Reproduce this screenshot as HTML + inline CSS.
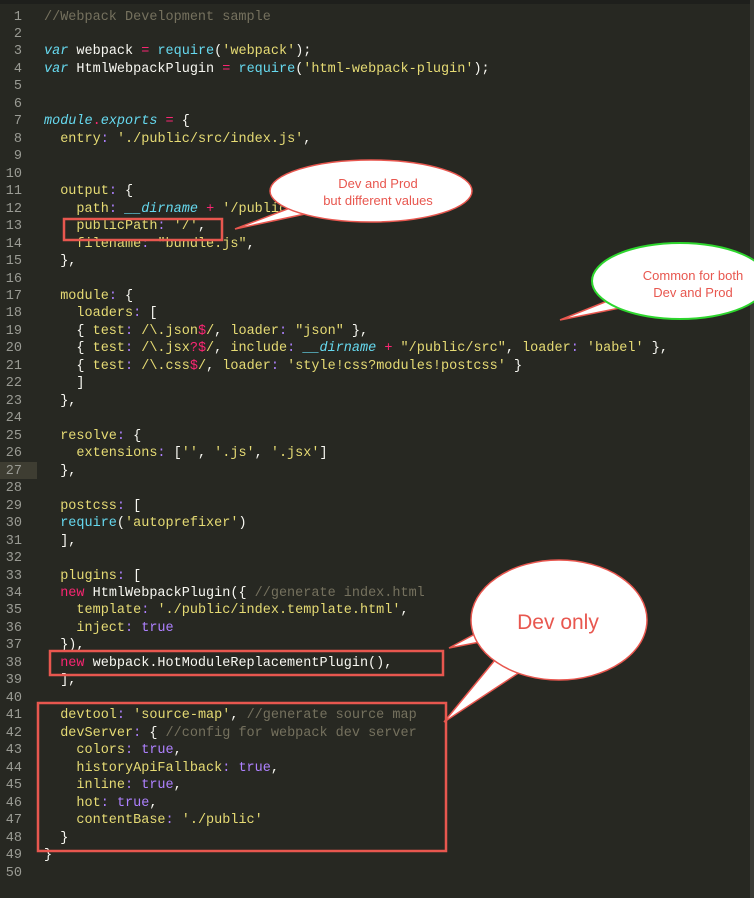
<!DOCTYPE html>
<html><head><meta charset="utf-8"><style>
html,body{margin:0;padding:0;background:#272822;width:754px;height:898px;overflow:hidden}
.l{position:absolute;left:0;height:17px;width:754px;font:13.5px/17px "Liberation Mono",monospace;white-space:pre;color:#F8F8F2}
.n{position:absolute;left:0;width:22px;text-align:right;color:#9a9b94}
.c{position:absolute;left:44px}
.cm{color:#75715E}.k{color:#F92672}.s{color:#66D9EF;font-style:italic}.f{color:#66D9EF}.st{color:#E6DB74}.p{color:#E6DB74}.o{color:#AE81FF}.t{color:#AE81FF}
</style></head><body>
<div style="position:absolute;left:0;top:0;width:754px;height:4px;background:#1e1f1c"></div>
<div style="position:absolute;left:750px;top:0;width:4px;height:898px;background:#3a3b36"></div>
<div style="position:absolute;left:0;top:462px;width:37px;height:17px;background:#3e3d32"></div>
<div id="code"></div>
<script>
const L=[
'<span class=cm>//Webpack Development sample</span>','',
'<span class=s>var</span> webpack <span class=k>=</span> <span class=f>require</span>(<span class=st>\'webpack\'</span>);',
'<span class=s>var</span> HtmlWebpackPlugin <span class=k>=</span> <span class=f>require</span>(<span class=st>\'html-webpack-plugin\'</span>);',
'','',
'<span class=s>module</span><span class=k>.</span><span class=s>exports</span> <span class=k>=</span> {',
'  <span class=p>entry</span><span class=o>:</span> <span class=st>\'./public/src/index.js\'</span>,',
'','',
'  <span class=p>output</span><span class=o>:</span> {',
'    <span class=p>path</span><span class=o>:</span> <span class=s>__dirname</span> <span class=k>+</span> <span class=st>\'/public\'</span>,',
'    <span class=p>publicPath</span><span class=o>:</span> <span class=st>\'/\'</span>,',
'    <span class=p>filename</span><span class=o>:</span> <span class=st>"bundle.js"</span>,',
'  },','',
'  <span class=p>module</span><span class=o>:</span> {',
'    <span class=p>loaders</span><span class=o>:</span> [',
'    { <span class=p>test</span><span class=o>:</span> <span class=st>/\\.json<span class=k>$</span>/</span>, <span class=p>loader</span><span class=o>:</span> <span class=st>"json"</span> },',
'    { <span class=p>test</span><span class=o>:</span> <span class=st>/\\.jsx<span class=k>?$</span>/</span>, <span class=p>include</span><span class=o>:</span> <span class=s>__dirname</span> <span class=k>+</span> <span class=st>"/public/src"</span>, <span class=p>loader</span><span class=o>:</span> <span class=st>\'babel\'</span> },',
'    { <span class=p>test</span><span class=o>:</span> <span class=st>/\\.css<span class=k>$</span>/</span>, <span class=p>loader</span><span class=o>:</span> <span class=st>\'style!css?modules!postcss\'</span> }',
'    ]','  },','',
'  <span class=p>resolve</span><span class=o>:</span> {',
'    <span class=p>extensions</span><span class=o>:</span> [<span class=st>\'\'</span>, <span class=st>\'.js\'</span>, <span class=st>\'.jsx\'</span>]',
'  },','',
'  <span class=p>postcss</span><span class=o>:</span> [',
'  <span class=f>require</span>(<span class=st>\'autoprefixer\'</span>)',
'  ],','',
'  <span class=p>plugins</span><span class=o>:</span> [',
'  <span class=k>new</span> HtmlWebpackPlugin({ <span class=cm>//generate index.html</span>',
'    <span class=p>template</span><span class=o>:</span> <span class=st>\'./public/index.template.html\'</span>,',
'    <span class=p>inject</span><span class=o>:</span> <span class=t>true</span>',
'  }),',
'  <span class=k>new</span> webpack.HotModuleReplacementPlugin(),',
'  ],','',
'  <span class=p>devtool</span><span class=o>:</span> <span class=st>\'source-map\'</span>, <span class=cm>//generate source map</span>',
'  <span class=p>devServer</span><span class=o>:</span> { <span class=cm>//config for webpack dev server</span>',
'    <span class=p>colors</span><span class=o>:</span> <span class=t>true</span>,',
'    <span class=p>historyApiFallback</span><span class=o>:</span> <span class=t>true</span>,',
'    <span class=p>inline</span><span class=o>:</span> <span class=t>true</span>,',
'    <span class=p>hot</span><span class=o>:</span> <span class=t>true</span>,',
'    <span class=p>contentBase</span><span class=o>:</span> <span class=st>\'./public\'</span>',
'  }','}',''];
let h='';L.forEach((x,i)=>{const y=17+i*17.47-8.5;h+=`<div class=l style="top:${y}px"><span class=n>${i+1}</span><span class=c>${x}</span></div>`});
document.getElementById('code').innerHTML=h;
</script>
<svg width="754" height="898" style="position:absolute;left:0;top:0" xmlns="http://www.w3.org/2000/svg">
<g fill="none" stroke="#E8574F" stroke-width="2.5">
<rect x="64" y="219" width="158" height="21"/>
<rect x="50" y="651" width="393" height="24"/>
<rect x="38" y="703" width="408" height="148"/>
</g>
<g fill="#fff" stroke="#E8574F" stroke-width="1.5">
<path d="M290 208 L235 229 L305 214 Z"/>
<ellipse cx="371" cy="191" rx="101" ry="31"/>
<path d="M610 300 L560 320 L620 308 Z"/>
<ellipse cx="680" cy="281" rx="88" ry="38" stroke="#2ed62e" stroke-width="2"/>
<path d="M475 634 L449 648 L480 642 Z"/>
<path d="M495 660 L444 722 L520 672 Z"/>
<ellipse cx="559" cy="620" rx="88" ry="60"/>
</g>
<g font-family="Liberation Sans, sans-serif" fill="#E8574F" text-anchor="middle">
<text x="378" y="188" font-size="13">Dev and Prod</text>
<text x="378" y="205" font-size="13">but different values</text>
<text x="693" y="280" font-size="13">Common for both</text>
<text x="693" y="297" font-size="13">Dev and Prod</text>
<text x="558" y="629" font-size="21">Dev only</text>
</g>
</svg>
</body></html>
